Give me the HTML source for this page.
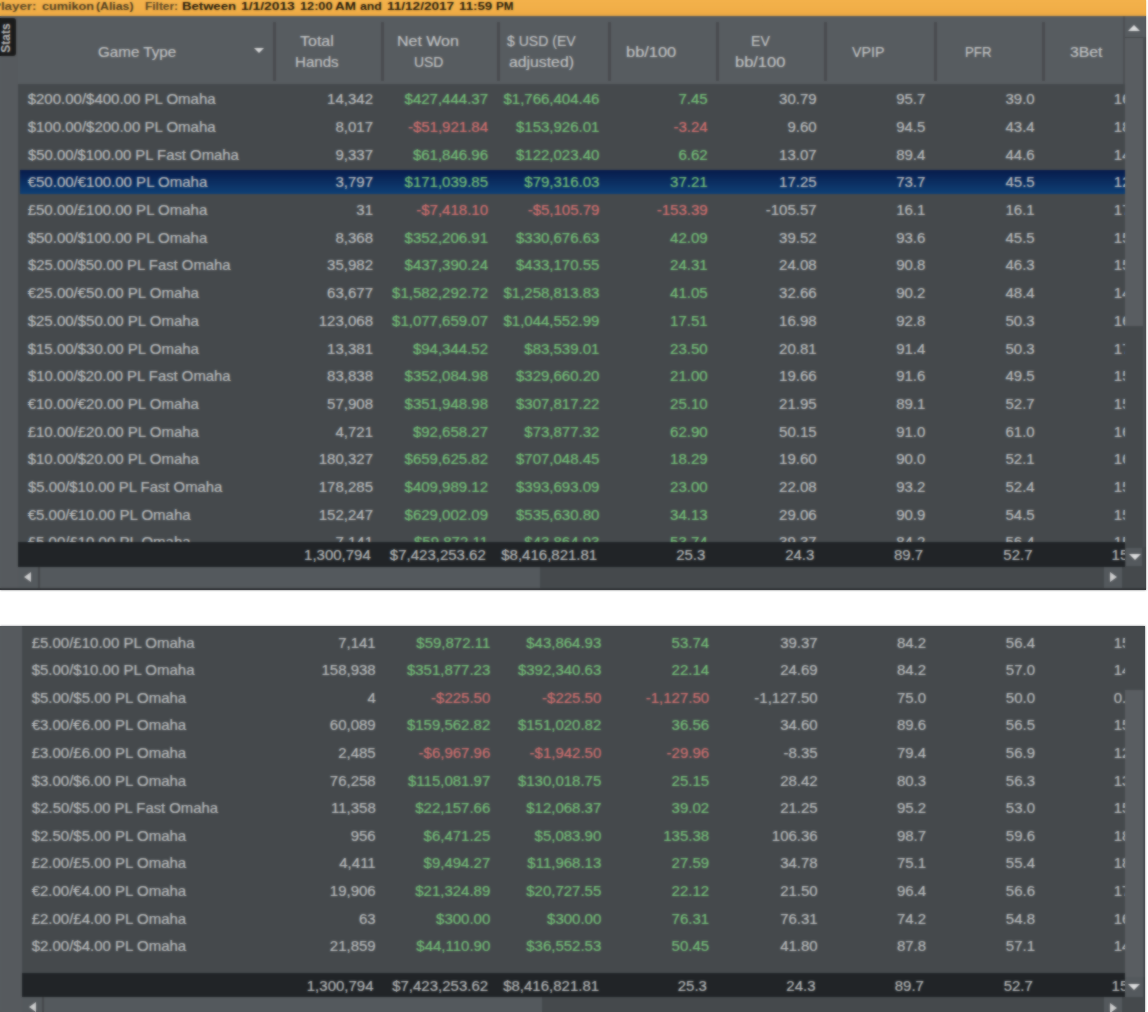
<!DOCTYPE html><html><head><meta charset='utf-8'><style>
*{margin:0;padding:0;box-sizing:border-box}
html,body{width:1148px;height:1012px;overflow:hidden;background:#fff;font-family:"Liberation Sans",sans-serif}
.a{position:absolute}
.t{position:absolute;white-space:nowrap;font-size:15px;line-height:18px;color:#bcbebf;-webkit-text-stroke:0.2px}
.g{color:#76c079}
.r{color:#d27070}
.f{color:#b9bbbc}
.hd{position:absolute;white-space:nowrap;font-size:15px;line-height:20px;color:#c3c5c6;text-align:center;-webkit-text-stroke:0.15px}
</style></head><body><div style='position:absolute;left:0;top:0;width:1148px;height:1012px;overflow:hidden'><div class="a" style="left:0;top:0;width:1146px;height:16.5px;background:linear-gradient(#f3b24c,#f0ad47 70%,#e3a443)"></div>
<div class="a" style="left:0;top:16px;width:1146px;height:1px;background:#7a6a50"></div>
<div class="a" style="left:-8.00px;top:0.3px;white-space:nowrap;font-size:10px;line-height:14px;font-weight:bold;color:#5a4624;-webkit-text-stroke:0;transform-origin:0 0;transform:scaleX(1.334)">Player:</div>
<div class="a" style="left:42.00px;top:0.3px;white-space:nowrap;font-size:10px;line-height:14px;font-weight:bold;color:#4e3c1e;-webkit-text-stroke:0;transform-origin:0 0;transform:scaleX(1.265)">cumikon</div>
<div class="a" style="left:96.00px;top:0.3px;white-space:nowrap;font-size:10px;line-height:14px;font-weight:bold;color:#4e3c1e;-webkit-text-stroke:0;transform-origin:0 0;transform:scaleX(1.227)">(Alias)</div>
<div class="a" style="left:144.80px;top:0.3px;white-space:nowrap;font-size:10px;line-height:14px;font-weight:bold;color:#5a4624;-webkit-text-stroke:0;transform-origin:0 0;transform:scaleX(1.191)">Filter:</div>
<div class="a" style="left:182.30px;top:0.3px;white-space:nowrap;font-size:10px;line-height:14px;font-weight:bold;color:#241a0a;-webkit-text-stroke:0;transform-origin:0 0;transform:scaleX(1.313)">Between</div>
<div class="a" style="left:240.60px;top:0.3px;white-space:nowrap;font-size:10px;line-height:14px;font-weight:bold;color:#241a0a;-webkit-text-stroke:0;transform-origin:0 0;transform:scaleX(1.381)">1/1/2013</div>
<div class="a" style="left:299.90px;top:0.3px;white-space:nowrap;font-size:10px;line-height:14px;font-weight:bold;color:#241a0a;-webkit-text-stroke:0;transform-origin:0 0;transform:scaleX(1.271)">12:00</div>
<div class="a" style="left:334.90px;top:0.3px;white-space:nowrap;font-size:10px;line-height:14px;font-weight:bold;color:#241a0a;-webkit-text-stroke:0;transform-origin:0 0;transform:scaleX(1.344)">AM</div>
<div class="a" style="left:360.00px;top:0.3px;white-space:nowrap;font-size:10px;line-height:14px;font-weight:bold;color:#241a0a;-webkit-text-stroke:0;transform-origin:0 0;transform:scaleX(1.226)">and</div>
<div class="a" style="left:387.00px;top:0.3px;white-space:nowrap;font-size:10px;line-height:14px;font-weight:bold;color:#241a0a;-webkit-text-stroke:0;transform-origin:0 0;transform:scaleX(1.354)">11/12/2017</div>
<div class="a" style="left:459.40px;top:0.3px;white-space:nowrap;font-size:10px;line-height:14px;font-weight:bold;color:#241a0a;-webkit-text-stroke:0;transform-origin:0 0;transform:scaleX(1.323)">11:59</div>
<div class="a" style="left:496.00px;top:0.3px;white-space:nowrap;font-size:10px;line-height:14px;font-weight:bold;color:#241a0a;-webkit-text-stroke:0;transform-origin:0 0;transform:scaleX(1.160)">PM</div>
<div class="a" style="left:0.00px;top:16.00px;width:1146.00px;height:574.00px;background:#454a4d;"></div>
<div class="a" style="left:0.00px;top:16.00px;width:18.00px;height:574.00px;background:#575b5f;"></div>
<div class="a" style="left:18.00px;top:16.00px;width:1128.00px;height:68.40px;background:#585c60;"></div>
<div class="a" style="left:272.50px;top:22.00px;width:3.00px;height:58.50px;background:#4a4c50;"></div>
<div class="a" style="left:380.50px;top:22.00px;width:3.00px;height:58.50px;background:#4a4c50;"></div>
<div class="a" style="left:496.50px;top:22.00px;width:3.00px;height:58.50px;background:#4a4c50;"></div>
<div class="a" style="left:607.50px;top:22.00px;width:3.00px;height:58.50px;background:#4a4c50;"></div>
<div class="a" style="left:715.50px;top:22.00px;width:3.00px;height:58.50px;background:#4a4c50;"></div>
<div class="a" style="left:823.50px;top:22.00px;width:3.00px;height:58.50px;background:#4a4c50;"></div>
<div class="a" style="left:933.50px;top:22.00px;width:3.00px;height:58.50px;background:#4a4c50;"></div>
<div class="a" style="left:1041.50px;top:22.00px;width:3.00px;height:58.50px;background:#4a4c50;"></div>
<div class="a" style="left:18.00px;top:84.40px;width:1106.60px;height:457.60px;background:#454a4d;"></div>
<div class="a" style="left:0;top:84.4px;width:1124.60px;height:457.6px;overflow:hidden">
<div class="t " style="left:27.70px;top:5.90px">$200.00/$400.00 PL Omaha</div>
<div class="t " style="left:73.00px;top:5.90px;width:300px;text-align:right">14,342</div>
<div class="t g" style="left:188.00px;top:5.90px;width:300px;text-align:right">$427,444.37</div>
<div class="t g" style="left:299.40px;top:5.90px;width:300px;text-align:right">$1,766,404.46</div>
<div class="t g" style="left:407.60px;top:5.90px;width:300px;text-align:right">7.45</div>
<div class="t " style="left:516.60px;top:5.90px;width:300px;text-align:right">30.79</div>
<div class="t " style="left:625.40px;top:5.90px;width:300px;text-align:right">95.7</div>
<div class="t " style="left:734.70px;top:5.90px;width:300px;text-align:right">39.0</div>
<div class="t " style="left:843.00px;top:5.90px;width:300px;text-align:right">16.8</div>
<div class="t " style="left:27.70px;top:33.60px">$100.00/$200.00 PL Omaha</div>
<div class="t " style="left:73.00px;top:33.60px;width:300px;text-align:right">8,017</div>
<div class="t r" style="left:188.00px;top:33.60px;width:300px;text-align:right">-$51,921.84</div>
<div class="t g" style="left:299.40px;top:33.60px;width:300px;text-align:right">$153,926.01</div>
<div class="t r" style="left:407.60px;top:33.60px;width:300px;text-align:right">-3.24</div>
<div class="t " style="left:516.60px;top:33.60px;width:300px;text-align:right">9.60</div>
<div class="t " style="left:625.40px;top:33.60px;width:300px;text-align:right">94.5</div>
<div class="t " style="left:734.70px;top:33.60px;width:300px;text-align:right">43.4</div>
<div class="t " style="left:843.00px;top:33.60px;width:300px;text-align:right">18.1</div>
<div class="t" style="left:27.70px;top:61.30px;transform-origin:0 0;transform:scaleX(0.99)">$50.00/$100.00 PL Fast Omaha</div>
<div class="t " style="left:73.00px;top:61.30px;width:300px;text-align:right">9,337</div>
<div class="t g" style="left:188.00px;top:61.30px;width:300px;text-align:right">$61,846.96</div>
<div class="t g" style="left:299.40px;top:61.30px;width:300px;text-align:right">$122,023.40</div>
<div class="t g" style="left:407.60px;top:61.30px;width:300px;text-align:right">6.62</div>
<div class="t " style="left:516.60px;top:61.30px;width:300px;text-align:right">13.07</div>
<div class="t " style="left:625.40px;top:61.30px;width:300px;text-align:right">89.4</div>
<div class="t " style="left:734.70px;top:61.30px;width:300px;text-align:right">44.6</div>
<div class="t " style="left:843.00px;top:61.30px;width:300px;text-align:right">14.6</div>
<div class="a" style="left:20.00px;top:85.20px;width:1104.60px;height:24.6px;background:linear-gradient(#081c4c,#104176)"></div>
<div class="t " style="left:27.70px;top:89.00px">€50.00/€100.00 PL Omaha</div>
<div class="t " style="left:73.00px;top:89.00px;width:300px;text-align:right">3,797</div>
<div class="t g" style="left:188.00px;top:89.00px;width:300px;text-align:right">$171,039.85</div>
<div class="t g" style="left:299.40px;top:89.00px;width:300px;text-align:right">$79,316.03</div>
<div class="t g" style="left:407.60px;top:89.00px;width:300px;text-align:right">37.21</div>
<div class="t " style="left:516.60px;top:89.00px;width:300px;text-align:right">17.25</div>
<div class="t " style="left:625.40px;top:89.00px;width:300px;text-align:right">73.7</div>
<div class="t " style="left:734.70px;top:89.00px;width:300px;text-align:right">45.5</div>
<div class="t " style="left:843.00px;top:89.00px;width:300px;text-align:right">12.9</div>
<div class="t " style="left:27.70px;top:116.70px">£50.00/£100.00 PL Omaha</div>
<div class="t " style="left:73.00px;top:116.70px;width:300px;text-align:right">31</div>
<div class="t r" style="left:188.00px;top:116.70px;width:300px;text-align:right">-$7,418.10</div>
<div class="t r" style="left:299.40px;top:116.70px;width:300px;text-align:right">-$5,105.79</div>
<div class="t r" style="left:407.60px;top:116.70px;width:300px;text-align:right">-153.39</div>
<div class="t " style="left:516.60px;top:116.70px;width:300px;text-align:right">-105.57</div>
<div class="t " style="left:625.40px;top:116.70px;width:300px;text-align:right">16.1</div>
<div class="t " style="left:734.70px;top:116.70px;width:300px;text-align:right">16.1</div>
<div class="t " style="left:843.00px;top:116.70px;width:300px;text-align:right">17.6</div>
<div class="t " style="left:27.70px;top:144.40px">$50.00/$100.00 PL Omaha</div>
<div class="t " style="left:73.00px;top:144.40px;width:300px;text-align:right">8,368</div>
<div class="t g" style="left:188.00px;top:144.40px;width:300px;text-align:right">$352,206.91</div>
<div class="t g" style="left:299.40px;top:144.40px;width:300px;text-align:right">$330,676.63</div>
<div class="t g" style="left:407.60px;top:144.40px;width:300px;text-align:right">42.09</div>
<div class="t " style="left:516.60px;top:144.40px;width:300px;text-align:right">39.52</div>
<div class="t " style="left:625.40px;top:144.40px;width:300px;text-align:right">93.6</div>
<div class="t " style="left:734.70px;top:144.40px;width:300px;text-align:right">45.5</div>
<div class="t " style="left:843.00px;top:144.40px;width:300px;text-align:right">15.2</div>
<div class="t" style="left:27.70px;top:172.10px;transform-origin:0 0;transform:scaleX(0.99)">$25.00/$50.00 PL Fast Omaha</div>
<div class="t " style="left:73.00px;top:172.10px;width:300px;text-align:right">35,982</div>
<div class="t g" style="left:188.00px;top:172.10px;width:300px;text-align:right">$437,390.24</div>
<div class="t g" style="left:299.40px;top:172.10px;width:300px;text-align:right">$433,170.55</div>
<div class="t g" style="left:407.60px;top:172.10px;width:300px;text-align:right">24.31</div>
<div class="t " style="left:516.60px;top:172.10px;width:300px;text-align:right">24.08</div>
<div class="t " style="left:625.40px;top:172.10px;width:300px;text-align:right">90.8</div>
<div class="t " style="left:734.70px;top:172.10px;width:300px;text-align:right">46.3</div>
<div class="t " style="left:843.00px;top:172.10px;width:300px;text-align:right">15.4</div>
<div class="t " style="left:27.70px;top:199.80px">€25.00/€50.00 PL Omaha</div>
<div class="t " style="left:73.00px;top:199.80px;width:300px;text-align:right">63,677</div>
<div class="t g" style="left:188.00px;top:199.80px;width:300px;text-align:right">$1,582,292.72</div>
<div class="t g" style="left:299.40px;top:199.80px;width:300px;text-align:right">$1,258,813.83</div>
<div class="t g" style="left:407.60px;top:199.80px;width:300px;text-align:right">41.05</div>
<div class="t " style="left:516.60px;top:199.80px;width:300px;text-align:right">32.66</div>
<div class="t " style="left:625.40px;top:199.80px;width:300px;text-align:right">90.2</div>
<div class="t " style="left:734.70px;top:199.80px;width:300px;text-align:right">48.4</div>
<div class="t " style="left:843.00px;top:199.80px;width:300px;text-align:right">14.3</div>
<div class="t " style="left:27.70px;top:227.50px">$25.00/$50.00 PL Omaha</div>
<div class="t " style="left:73.00px;top:227.50px;width:300px;text-align:right">123,068</div>
<div class="t g" style="left:188.00px;top:227.50px;width:300px;text-align:right">$1,077,659.07</div>
<div class="t g" style="left:299.40px;top:227.50px;width:300px;text-align:right">$1,044,552.99</div>
<div class="t g" style="left:407.60px;top:227.50px;width:300px;text-align:right">17.51</div>
<div class="t " style="left:516.60px;top:227.50px;width:300px;text-align:right">16.98</div>
<div class="t " style="left:625.40px;top:227.50px;width:300px;text-align:right">92.8</div>
<div class="t " style="left:734.70px;top:227.50px;width:300px;text-align:right">50.3</div>
<div class="t " style="left:843.00px;top:227.50px;width:300px;text-align:right">16.2</div>
<div class="t " style="left:27.70px;top:255.20px">$15.00/$30.00 PL Omaha</div>
<div class="t " style="left:73.00px;top:255.20px;width:300px;text-align:right">13,381</div>
<div class="t g" style="left:188.00px;top:255.20px;width:300px;text-align:right">$94,344.52</div>
<div class="t g" style="left:299.40px;top:255.20px;width:300px;text-align:right">$83,539.01</div>
<div class="t g" style="left:407.60px;top:255.20px;width:300px;text-align:right">23.50</div>
<div class="t " style="left:516.60px;top:255.20px;width:300px;text-align:right">20.81</div>
<div class="t " style="left:625.40px;top:255.20px;width:300px;text-align:right">91.4</div>
<div class="t " style="left:734.70px;top:255.20px;width:300px;text-align:right">50.3</div>
<div class="t " style="left:843.00px;top:255.20px;width:300px;text-align:right">17.1</div>
<div class="t" style="left:27.70px;top:282.90px;transform-origin:0 0;transform:scaleX(0.99)">$10.00/$20.00 PL Fast Omaha</div>
<div class="t " style="left:73.00px;top:282.90px;width:300px;text-align:right">83,838</div>
<div class="t g" style="left:188.00px;top:282.90px;width:300px;text-align:right">$352,084.98</div>
<div class="t g" style="left:299.40px;top:282.90px;width:300px;text-align:right">$329,660.20</div>
<div class="t g" style="left:407.60px;top:282.90px;width:300px;text-align:right">21.00</div>
<div class="t " style="left:516.60px;top:282.90px;width:300px;text-align:right">19.66</div>
<div class="t " style="left:625.40px;top:282.90px;width:300px;text-align:right">91.6</div>
<div class="t " style="left:734.70px;top:282.90px;width:300px;text-align:right">49.5</div>
<div class="t " style="left:843.00px;top:282.90px;width:300px;text-align:right">15.5</div>
<div class="t " style="left:27.70px;top:310.60px">€10.00/€20.00 PL Omaha</div>
<div class="t " style="left:73.00px;top:310.60px;width:300px;text-align:right">57,908</div>
<div class="t g" style="left:188.00px;top:310.60px;width:300px;text-align:right">$351,948.98</div>
<div class="t g" style="left:299.40px;top:310.60px;width:300px;text-align:right">$307,817.22</div>
<div class="t g" style="left:407.60px;top:310.60px;width:300px;text-align:right">25.10</div>
<div class="t " style="left:516.60px;top:310.60px;width:300px;text-align:right">21.95</div>
<div class="t " style="left:625.40px;top:310.60px;width:300px;text-align:right">89.1</div>
<div class="t " style="left:734.70px;top:310.60px;width:300px;text-align:right">52.7</div>
<div class="t " style="left:843.00px;top:310.60px;width:300px;text-align:right">15.9</div>
<div class="t " style="left:27.70px;top:338.30px">£10.00/£20.00 PL Omaha</div>
<div class="t " style="left:73.00px;top:338.30px;width:300px;text-align:right">4,721</div>
<div class="t g" style="left:188.00px;top:338.30px;width:300px;text-align:right">$92,658.27</div>
<div class="t g" style="left:299.40px;top:338.30px;width:300px;text-align:right">$73,877.32</div>
<div class="t g" style="left:407.60px;top:338.30px;width:300px;text-align:right">62.90</div>
<div class="t " style="left:516.60px;top:338.30px;width:300px;text-align:right">50.15</div>
<div class="t " style="left:625.40px;top:338.30px;width:300px;text-align:right">91.0</div>
<div class="t " style="left:734.70px;top:338.30px;width:300px;text-align:right">61.0</div>
<div class="t " style="left:843.00px;top:338.30px;width:300px;text-align:right">16.1</div>
<div class="t " style="left:27.70px;top:366.00px">$10.00/$20.00 PL Omaha</div>
<div class="t " style="left:73.00px;top:366.00px;width:300px;text-align:right">180,327</div>
<div class="t g" style="left:188.00px;top:366.00px;width:300px;text-align:right">$659,625.82</div>
<div class="t g" style="left:299.40px;top:366.00px;width:300px;text-align:right">$707,048.45</div>
<div class="t g" style="left:407.60px;top:366.00px;width:300px;text-align:right">18.29</div>
<div class="t " style="left:516.60px;top:366.00px;width:300px;text-align:right">19.60</div>
<div class="t " style="left:625.40px;top:366.00px;width:300px;text-align:right">90.0</div>
<div class="t " style="left:734.70px;top:366.00px;width:300px;text-align:right">52.1</div>
<div class="t " style="left:843.00px;top:366.00px;width:300px;text-align:right">16.4</div>
<div class="t" style="left:27.70px;top:393.70px;transform-origin:0 0;transform:scaleX(0.99)">$5.00/$10.00 PL Fast Omaha</div>
<div class="t " style="left:73.00px;top:393.70px;width:300px;text-align:right">178,285</div>
<div class="t g" style="left:188.00px;top:393.70px;width:300px;text-align:right">$409,989.12</div>
<div class="t g" style="left:299.40px;top:393.70px;width:300px;text-align:right">$393,693.09</div>
<div class="t g" style="left:407.60px;top:393.70px;width:300px;text-align:right">23.00</div>
<div class="t " style="left:516.60px;top:393.70px;width:300px;text-align:right">22.08</div>
<div class="t " style="left:625.40px;top:393.70px;width:300px;text-align:right">93.2</div>
<div class="t " style="left:734.70px;top:393.70px;width:300px;text-align:right">52.4</div>
<div class="t " style="left:843.00px;top:393.70px;width:300px;text-align:right">15.3</div>
<div class="t " style="left:27.70px;top:421.40px">€5.00/€10.00 PL Omaha</div>
<div class="t " style="left:73.00px;top:421.40px;width:300px;text-align:right">152,247</div>
<div class="t g" style="left:188.00px;top:421.40px;width:300px;text-align:right">$629,002.09</div>
<div class="t g" style="left:299.40px;top:421.40px;width:300px;text-align:right">$535,630.80</div>
<div class="t g" style="left:407.60px;top:421.40px;width:300px;text-align:right">34.13</div>
<div class="t " style="left:516.60px;top:421.40px;width:300px;text-align:right">29.06</div>
<div class="t " style="left:625.40px;top:421.40px;width:300px;text-align:right">90.9</div>
<div class="t " style="left:734.70px;top:421.40px;width:300px;text-align:right">54.5</div>
<div class="t " style="left:843.00px;top:421.40px;width:300px;text-align:right">15.8</div>
<div class="t " style="left:27.70px;top:449.10px">£5.00/£10.00 PL Omaha</div>
<div class="t " style="left:73.00px;top:449.10px;width:300px;text-align:right">7,141</div>
<div class="t g" style="left:188.00px;top:449.10px;width:300px;text-align:right">$59,872.11</div>
<div class="t g" style="left:299.40px;top:449.10px;width:300px;text-align:right">$43,864.93</div>
<div class="t g" style="left:407.60px;top:449.10px;width:300px;text-align:right">53.74</div>
<div class="t " style="left:516.60px;top:449.10px;width:300px;text-align:right">39.37</div>
<div class="t " style="left:625.40px;top:449.10px;width:300px;text-align:right">84.2</div>
<div class="t " style="left:734.70px;top:449.10px;width:300px;text-align:right">56.4</div>
<div class="t " style="left:843.00px;top:449.10px;width:300px;text-align:right">15.1</div>
</div>
<div class="a" style="left:18.00px;top:542.00px;width:1106.60px;height:25.00px;background:#212528;"></div>
<div class="a" style="left:0;top:542px;width:1124.60px;height:25px;overflow:hidden">
<div class="t f" style="left:70.80px;top:4.00px;width:300px;text-align:right">1,300,794</div>
<div class="t f" style="left:185.80px;top:4.00px;width:300px;text-align:right">$7,423,253.62</div>
<div class="t f" style="left:297.20px;top:4.00px;width:300px;text-align:right">$8,416,821.81</div>
<div class="t f" style="left:405.40px;top:4.00px;width:300px;text-align:right">25.3</div>
<div class="t f" style="left:514.40px;top:4.00px;width:300px;text-align:right">24.3</div>
<div class="t f" style="left:623.20px;top:4.00px;width:300px;text-align:right">89.7</div>
<div class="t f" style="left:732.50px;top:4.00px;width:300px;text-align:right">52.7</div>
<div class="t f" style="left:840.80px;top:4.00px;width:300px;text-align:right">15.6</div>
</div>
<div class="a" style="left:1124.60px;top:37.00px;width:21.40px;height:289.00px;background:#5a5e62;"></div>
<div class="a" style="left:18.00px;top:567.00px;width:1106.60px;height:21.00px;background:#454a4d;"></div>
<div class="a" style="left:18.00px;top:567.00px;width:522.00px;height:21.00px;background:#55595d;"></div>
<div class="a" style="left:37.50px;top:567.00px;width:2.00px;height:21.00px;background:#47494c;"></div>
<div class="a" style="left:1104.00px;top:567.00px;width:18.30px;height:21.00px;background:#55595d;"></div>
<div class="a" style="left:0.00px;top:626.00px;width:1145.00px;height:386.00px;background:#454a4d;"></div>
<div class="a" style="left:0.00px;top:626.00px;width:22.00px;height:386.00px;background:#575b5f;"></div>
<div class="a" style="left:22.00px;top:626.00px;width:1102.62px;height:347.00px;background:#454a4d;"></div>
<div class="a" style="left:0;top:626px;width:1124.62px;height:347px;overflow:hidden">
<div class="t " style="left:31.67px;top:7.60px">£5.00/£10.00 PL Omaha</div>
<div class="t " style="left:75.72px;top:7.60px;width:300px;text-align:right">7,141</div>
<div class="t g" style="left:190.31px;top:7.60px;width:300px;text-align:right">$59,872.11</div>
<div class="t g" style="left:301.31px;top:7.60px;width:300px;text-align:right">$43,864.93</div>
<div class="t g" style="left:409.12px;top:7.60px;width:300px;text-align:right">53.74</div>
<div class="t " style="left:517.73px;top:7.60px;width:300px;text-align:right">39.37</div>
<div class="t " style="left:626.13px;top:7.60px;width:300px;text-align:right">84.2</div>
<div class="t " style="left:735.04px;top:7.60px;width:300px;text-align:right">56.4</div>
<div class="t " style="left:842.95px;top:7.60px;width:300px;text-align:right">15.1</div>
<div class="t " style="left:31.67px;top:35.20px">$5.00/$10.00 PL Omaha</div>
<div class="t " style="left:75.72px;top:35.20px;width:300px;text-align:right">158,938</div>
<div class="t g" style="left:190.31px;top:35.20px;width:300px;text-align:right">$351,877.23</div>
<div class="t g" style="left:301.31px;top:35.20px;width:300px;text-align:right">$392,340.63</div>
<div class="t g" style="left:409.12px;top:35.20px;width:300px;text-align:right">22.14</div>
<div class="t " style="left:517.73px;top:35.20px;width:300px;text-align:right">24.69</div>
<div class="t " style="left:626.13px;top:35.20px;width:300px;text-align:right">84.2</div>
<div class="t " style="left:735.04px;top:35.20px;width:300px;text-align:right">57.0</div>
<div class="t " style="left:842.95px;top:35.20px;width:300px;text-align:right">14.6</div>
<div class="t " style="left:31.67px;top:62.80px">$5.00/$5.00 PL Omaha</div>
<div class="t " style="left:75.72px;top:62.80px;width:300px;text-align:right">4</div>
<div class="t r" style="left:190.31px;top:62.80px;width:300px;text-align:right">-$225.50</div>
<div class="t r" style="left:301.31px;top:62.80px;width:300px;text-align:right">-$225.50</div>
<div class="t r" style="left:409.12px;top:62.80px;width:300px;text-align:right">-1,127.50</div>
<div class="t " style="left:517.73px;top:62.80px;width:300px;text-align:right">-1,127.50</div>
<div class="t " style="left:626.13px;top:62.80px;width:300px;text-align:right">75.0</div>
<div class="t " style="left:735.04px;top:62.80px;width:300px;text-align:right">50.0</div>
<div class="t " style="left:842.95px;top:62.80px;width:300px;text-align:right">0.00</div>
<div class="t " style="left:31.67px;top:90.40px">€3.00/€6.00 PL Omaha</div>
<div class="t " style="left:75.72px;top:90.40px;width:300px;text-align:right">60,089</div>
<div class="t g" style="left:190.31px;top:90.40px;width:300px;text-align:right">$159,562.82</div>
<div class="t g" style="left:301.31px;top:90.40px;width:300px;text-align:right">$151,020.82</div>
<div class="t g" style="left:409.12px;top:90.40px;width:300px;text-align:right">36.56</div>
<div class="t " style="left:517.73px;top:90.40px;width:300px;text-align:right">34.60</div>
<div class="t " style="left:626.13px;top:90.40px;width:300px;text-align:right">89.6</div>
<div class="t " style="left:735.04px;top:90.40px;width:300px;text-align:right">56.5</div>
<div class="t " style="left:842.95px;top:90.40px;width:300px;text-align:right">15.1</div>
<div class="t " style="left:31.67px;top:118.00px">£3.00/£6.00 PL Omaha</div>
<div class="t " style="left:75.72px;top:118.00px;width:300px;text-align:right">2,485</div>
<div class="t r" style="left:190.31px;top:118.00px;width:300px;text-align:right">-$6,967.96</div>
<div class="t r" style="left:301.31px;top:118.00px;width:300px;text-align:right">-$1,942.50</div>
<div class="t r" style="left:409.12px;top:118.00px;width:300px;text-align:right">-29.96</div>
<div class="t " style="left:517.73px;top:118.00px;width:300px;text-align:right">-8.35</div>
<div class="t " style="left:626.13px;top:118.00px;width:300px;text-align:right">79.4</div>
<div class="t " style="left:735.04px;top:118.00px;width:300px;text-align:right">56.9</div>
<div class="t " style="left:842.95px;top:118.00px;width:300px;text-align:right">12.5</div>
<div class="t " style="left:31.67px;top:145.60px">$3.00/$6.00 PL Omaha</div>
<div class="t " style="left:75.72px;top:145.60px;width:300px;text-align:right">76,258</div>
<div class="t g" style="left:190.31px;top:145.60px;width:300px;text-align:right">$115,081.97</div>
<div class="t g" style="left:301.31px;top:145.60px;width:300px;text-align:right">$130,018.75</div>
<div class="t g" style="left:409.12px;top:145.60px;width:300px;text-align:right">25.15</div>
<div class="t " style="left:517.73px;top:145.60px;width:300px;text-align:right">28.42</div>
<div class="t " style="left:626.13px;top:145.60px;width:300px;text-align:right">80.3</div>
<div class="t " style="left:735.04px;top:145.60px;width:300px;text-align:right">56.3</div>
<div class="t " style="left:842.95px;top:145.60px;width:300px;text-align:right">13.6</div>
<div class="t" style="left:31.67px;top:173.20px;transform-origin:0 0;transform:scaleX(0.99)">$2.50/$5.00 PL Fast Omaha</div>
<div class="t " style="left:75.72px;top:173.20px;width:300px;text-align:right">11,358</div>
<div class="t g" style="left:190.31px;top:173.20px;width:300px;text-align:right">$22,157.66</div>
<div class="t g" style="left:301.31px;top:173.20px;width:300px;text-align:right">$12,068.37</div>
<div class="t g" style="left:409.12px;top:173.20px;width:300px;text-align:right">39.02</div>
<div class="t " style="left:517.73px;top:173.20px;width:300px;text-align:right">21.25</div>
<div class="t " style="left:626.13px;top:173.20px;width:300px;text-align:right">95.2</div>
<div class="t " style="left:735.04px;top:173.20px;width:300px;text-align:right">53.0</div>
<div class="t " style="left:842.95px;top:173.20px;width:300px;text-align:right">15.3</div>
<div class="t " style="left:31.67px;top:200.80px">$2.50/$5.00 PL Omaha</div>
<div class="t " style="left:75.72px;top:200.80px;width:300px;text-align:right">956</div>
<div class="t g" style="left:190.31px;top:200.80px;width:300px;text-align:right">$6,471.25</div>
<div class="t g" style="left:301.31px;top:200.80px;width:300px;text-align:right">$5,083.90</div>
<div class="t g" style="left:409.12px;top:200.80px;width:300px;text-align:right">135.38</div>
<div class="t " style="left:517.73px;top:200.80px;width:300px;text-align:right">106.36</div>
<div class="t " style="left:626.13px;top:200.80px;width:300px;text-align:right">98.7</div>
<div class="t " style="left:735.04px;top:200.80px;width:300px;text-align:right">59.6</div>
<div class="t " style="left:842.95px;top:200.80px;width:300px;text-align:right">18.2</div>
<div class="t " style="left:31.67px;top:228.40px">£2.00/£5.00 PL Omaha</div>
<div class="t " style="left:75.72px;top:228.40px;width:300px;text-align:right">4,411</div>
<div class="t g" style="left:190.31px;top:228.40px;width:300px;text-align:right">$9,494.27</div>
<div class="t g" style="left:301.31px;top:228.40px;width:300px;text-align:right">$11,968.13</div>
<div class="t g" style="left:409.12px;top:228.40px;width:300px;text-align:right">27.59</div>
<div class="t " style="left:517.73px;top:228.40px;width:300px;text-align:right">34.78</div>
<div class="t " style="left:626.13px;top:228.40px;width:300px;text-align:right">75.1</div>
<div class="t " style="left:735.04px;top:228.40px;width:300px;text-align:right">55.4</div>
<div class="t " style="left:842.95px;top:228.40px;width:300px;text-align:right">18.3</div>
<div class="t " style="left:31.67px;top:256.00px">€2.00/€4.00 PL Omaha</div>
<div class="t " style="left:75.72px;top:256.00px;width:300px;text-align:right">19,906</div>
<div class="t g" style="left:190.31px;top:256.00px;width:300px;text-align:right">$21,324.89</div>
<div class="t g" style="left:301.31px;top:256.00px;width:300px;text-align:right">$20,727.55</div>
<div class="t g" style="left:409.12px;top:256.00px;width:300px;text-align:right">22.12</div>
<div class="t " style="left:517.73px;top:256.00px;width:300px;text-align:right">21.50</div>
<div class="t " style="left:626.13px;top:256.00px;width:300px;text-align:right">96.4</div>
<div class="t " style="left:735.04px;top:256.00px;width:300px;text-align:right">56.6</div>
<div class="t " style="left:842.95px;top:256.00px;width:300px;text-align:right">17.1</div>
<div class="t " style="left:31.67px;top:283.60px">£2.00/£4.00 PL Omaha</div>
<div class="t " style="left:75.72px;top:283.60px;width:300px;text-align:right">63</div>
<div class="t g" style="left:190.31px;top:283.60px;width:300px;text-align:right">$300.00</div>
<div class="t g" style="left:301.31px;top:283.60px;width:300px;text-align:right">$300.00</div>
<div class="t g" style="left:409.12px;top:283.60px;width:300px;text-align:right">76.31</div>
<div class="t " style="left:517.73px;top:283.60px;width:300px;text-align:right">76.31</div>
<div class="t " style="left:626.13px;top:283.60px;width:300px;text-align:right">74.2</div>
<div class="t " style="left:735.04px;top:283.60px;width:300px;text-align:right">54.8</div>
<div class="t " style="left:842.95px;top:283.60px;width:300px;text-align:right">16.7</div>
<div class="t " style="left:31.67px;top:311.20px">$2.00/$4.00 PL Omaha</div>
<div class="t " style="left:75.72px;top:311.20px;width:300px;text-align:right">21,859</div>
<div class="t g" style="left:190.31px;top:311.20px;width:300px;text-align:right">$44,110.90</div>
<div class="t g" style="left:301.31px;top:311.20px;width:300px;text-align:right">$36,552.53</div>
<div class="t g" style="left:409.12px;top:311.20px;width:300px;text-align:right">50.45</div>
<div class="t " style="left:517.73px;top:311.20px;width:300px;text-align:right">41.80</div>
<div class="t " style="left:626.13px;top:311.20px;width:300px;text-align:right">87.8</div>
<div class="t " style="left:735.04px;top:311.20px;width:300px;text-align:right">57.1</div>
<div class="t " style="left:842.95px;top:311.20px;width:300px;text-align:right">14.9</div>
</div>
<div class="a" style="left:22.00px;top:973.00px;width:1102.62px;height:24.00px;background:#212528;"></div>
<div class="a" style="left:0;top:973px;width:1124.62px;height:24px;overflow:hidden">
<div class="t f" style="left:73.52px;top:3.50px;width:300px;text-align:right">1,300,794</div>
<div class="t f" style="left:188.11px;top:3.50px;width:300px;text-align:right">$7,423,253.62</div>
<div class="t f" style="left:299.11px;top:3.50px;width:300px;text-align:right">$8,416,821.81</div>
<div class="t f" style="left:406.92px;top:3.50px;width:300px;text-align:right">25.3</div>
<div class="t f" style="left:515.53px;top:3.50px;width:300px;text-align:right">24.3</div>
<div class="t f" style="left:623.93px;top:3.50px;width:300px;text-align:right">89.7</div>
<div class="t f" style="left:732.84px;top:3.50px;width:300px;text-align:right">52.7</div>
<div class="t f" style="left:840.75px;top:3.50px;width:300px;text-align:right">15.6</div>
</div>
<div class="a" style="left:1124.62px;top:690.00px;width:20.38px;height:287.00px;background:#5a5e62;"></div>
<div class="a" style="left:22.00px;top:997.00px;width:1102.62px;height:15.00px;background:#454a4d;"></div>
<div class="a" style="left:22.00px;top:997.00px;width:520.12px;height:15.00px;background:#55595d;"></div>
<div class="a" style="left:41.50px;top:997.00px;width:2.00px;height:15.00px;background:#47494c;"></div>
<div class="a" style="left:1104.09px;top:997.00px;width:18.23px;height:15.00px;background:#55595d;"></div>
<div class="a" style="left:0;top:16px;width:1124.6px;height:68px;overflow:hidden">
<div class="hd" style="left:97.70px;top:26.30px;text-align:left;transform-origin:0 0;transform:scaleX(1.012)">Game Type</div>
<div class="hd" style="left:300.40px;top:15.30px;text-align:left;transform-origin:0 0;transform:scaleX(1.067)">Total</div>
<div class="hd" style="left:295.00px;top:35.70px;text-align:left;transform-origin:0 0;transform:scaleX(1.006)">Hands</div>
<div class="hd" style="left:397.20px;top:15.30px;text-align:left;transform-origin:0 0;transform:scaleX(1.064)">Net Won</div>
<div class="hd" style="left:413.90px;top:35.70px;text-align:left;transform-origin:0 0;transform:scaleX(0.928)">USD</div>
<div class="hd" style="left:507.40px;top:15.30px;text-align:left;transform-origin:0 0;transform:scaleX(0.935)">$ USD (EV</div>
<div class="hd" style="left:509.00px;top:35.70px;text-align:left;transform-origin:0 0;transform:scaleX(1.052)">adjusted)</div>
<div class="hd" style="left:626.40px;top:25.50px;text-align:left;transform-origin:0 0;transform:scaleX(1.094)">bb/100</div>
<div class="hd" style="left:751.30px;top:15.30px;text-align:left;transform-origin:0 0;transform:scaleX(0.939)">EV</div>
<div class="hd" style="left:735.30px;top:35.70px;text-align:left;transform-origin:0 0;transform:scaleX(1.096)">bb/100</div>
<div class="hd" style="left:852.40px;top:25.50px;text-align:left;transform-origin:0 0;transform:scaleX(0.948)">VPIP</div>
<div class="hd" style="left:964.80px;top:25.50px;text-align:left;transform-origin:0 0;transform:scaleX(0.883)">PFR</div>
<div class="hd" style="left:1070.10px;top:25.50px;text-align:left;transform-origin:0 0;transform:scaleX(1.053)">3Bet</div>
</div>
<div class="a" style="left:253.8px;top:47.8px;width:0;height:0;border-left:5.2px solid transparent;border-right:5.2px solid transparent;border-top:5.5px solid #d3d4d5"></div>
<div class="a" style="left:0;top:18.3px;width:15.5px;height:38px;background:#1b1c1d;border-radius:0 3px 3px 0"></div>
<div class="a" style="left:-14px;top:31px;width:40px;height:14px;transform:rotate(-90deg);font-size:12px;line-height:14px;font-weight:bold;color:#bdbdbd;text-align:center">Stats</div>
<div class="a" style="left:1124.60px;top:16.00px;width:21.40px;height:21.00px;background:#585c60;"></div>
<div class="a" style="left:1125.00px;top:36.50px;width:18.00px;height:1.50px;background:#454a4d;"></div>
<div class="a" style="left:1123.20px;top:16.00px;width:1.60px;height:68.00px;background:#4d5054;"></div>
<div class="a" style="left:1143.00px;top:37.00px;width:3.00px;height:510.00px;background:#4c4f53;"></div>
<div class="a" style="left:1128px;top:24.5px;width:0;height:0;border-left:6px solid transparent;border-right:6px solid transparent;border-bottom:6px solid #d9dadb"></div>
<div class="a" style="left:1125.60px;top:548.00px;width:16.00px;height:18.00px;background:#55595d;"></div>
<div class="a" style="left:1128.5px;top:553.6px;width:0;height:0;border-left:6px solid transparent;border-right:6px solid transparent;border-top:6px solid #d9dadb"></div>
<div class="a" style="left:24.3px;top:571.8px;width:0;height:0;border-top:5.5px solid transparent;border-bottom:5.5px solid transparent;border-right:7px solid #c9cacb"></div>
<div class="a" style="left:1109.8px;top:571.8px;width:0;height:0;border-top:5.5px solid transparent;border-bottom:5.5px solid transparent;border-left:7px solid #c9cacb"></div>
<div class="a" style="left:0.00px;top:588.00px;width:1146.00px;height:2.00px;background:#36393c;"></div>
<div class="a" style="left:1125.00px;top:977.20px;width:18.00px;height:19.50px;background:#55595d;"></div>
<div class="a" style="left:1128px;top:984px;width:0;height:0;border-left:6px solid transparent;border-right:6px solid transparent;border-top:6px solid #d9dadb"></div>
<div class="a" style="left:1143.00px;top:690.00px;width:2.00px;height:287.00px;background:#4c4f53;"></div>
<div class="a" style="left:29.1px;top:1002.0px;width:0;height:0;border-top:5.5px solid transparent;border-bottom:5.5px solid transparent;border-right:7px solid #c9cacb"></div>
<div class="a" style="left:1109.5px;top:1002.5px;width:0;height:0;border-top:5.5px solid transparent;border-bottom:5.5px solid transparent;border-left:7px solid #c9cacb"></div></div><div style='position:absolute;left:0;top:0;width:1148px;height:1012px;overflow:hidden;filter:blur(1.0px);opacity:0.7'><div class="a" style="left:0;top:0;width:1146px;height:16.5px;background:linear-gradient(#f3b24c,#f0ad47 70%,#e3a443)"></div>
<div class="a" style="left:0;top:16px;width:1146px;height:1px;background:#7a6a50"></div>
<div class="a" style="left:-8.00px;top:0.3px;white-space:nowrap;font-size:10px;line-height:14px;font-weight:bold;color:#5a4624;-webkit-text-stroke:0;transform-origin:0 0;transform:scaleX(1.334)">Player:</div>
<div class="a" style="left:42.00px;top:0.3px;white-space:nowrap;font-size:10px;line-height:14px;font-weight:bold;color:#4e3c1e;-webkit-text-stroke:0;transform-origin:0 0;transform:scaleX(1.265)">cumikon</div>
<div class="a" style="left:96.00px;top:0.3px;white-space:nowrap;font-size:10px;line-height:14px;font-weight:bold;color:#4e3c1e;-webkit-text-stroke:0;transform-origin:0 0;transform:scaleX(1.227)">(Alias)</div>
<div class="a" style="left:144.80px;top:0.3px;white-space:nowrap;font-size:10px;line-height:14px;font-weight:bold;color:#5a4624;-webkit-text-stroke:0;transform-origin:0 0;transform:scaleX(1.191)">Filter:</div>
<div class="a" style="left:182.30px;top:0.3px;white-space:nowrap;font-size:10px;line-height:14px;font-weight:bold;color:#241a0a;-webkit-text-stroke:0;transform-origin:0 0;transform:scaleX(1.313)">Between</div>
<div class="a" style="left:240.60px;top:0.3px;white-space:nowrap;font-size:10px;line-height:14px;font-weight:bold;color:#241a0a;-webkit-text-stroke:0;transform-origin:0 0;transform:scaleX(1.381)">1/1/2013</div>
<div class="a" style="left:299.90px;top:0.3px;white-space:nowrap;font-size:10px;line-height:14px;font-weight:bold;color:#241a0a;-webkit-text-stroke:0;transform-origin:0 0;transform:scaleX(1.271)">12:00</div>
<div class="a" style="left:334.90px;top:0.3px;white-space:nowrap;font-size:10px;line-height:14px;font-weight:bold;color:#241a0a;-webkit-text-stroke:0;transform-origin:0 0;transform:scaleX(1.344)">AM</div>
<div class="a" style="left:360.00px;top:0.3px;white-space:nowrap;font-size:10px;line-height:14px;font-weight:bold;color:#241a0a;-webkit-text-stroke:0;transform-origin:0 0;transform:scaleX(1.226)">and</div>
<div class="a" style="left:387.00px;top:0.3px;white-space:nowrap;font-size:10px;line-height:14px;font-weight:bold;color:#241a0a;-webkit-text-stroke:0;transform-origin:0 0;transform:scaleX(1.354)">11/12/2017</div>
<div class="a" style="left:459.40px;top:0.3px;white-space:nowrap;font-size:10px;line-height:14px;font-weight:bold;color:#241a0a;-webkit-text-stroke:0;transform-origin:0 0;transform:scaleX(1.323)">11:59</div>
<div class="a" style="left:496.00px;top:0.3px;white-space:nowrap;font-size:10px;line-height:14px;font-weight:bold;color:#241a0a;-webkit-text-stroke:0;transform-origin:0 0;transform:scaleX(1.160)">PM</div>
<div class="a" style="left:0.00px;top:16.00px;width:1146.00px;height:574.00px;background:#454a4d;"></div>
<div class="a" style="left:0.00px;top:16.00px;width:18.00px;height:574.00px;background:#575b5f;"></div>
<div class="a" style="left:18.00px;top:16.00px;width:1128.00px;height:68.40px;background:#585c60;"></div>
<div class="a" style="left:272.50px;top:22.00px;width:3.00px;height:58.50px;background:#4a4c50;"></div>
<div class="a" style="left:380.50px;top:22.00px;width:3.00px;height:58.50px;background:#4a4c50;"></div>
<div class="a" style="left:496.50px;top:22.00px;width:3.00px;height:58.50px;background:#4a4c50;"></div>
<div class="a" style="left:607.50px;top:22.00px;width:3.00px;height:58.50px;background:#4a4c50;"></div>
<div class="a" style="left:715.50px;top:22.00px;width:3.00px;height:58.50px;background:#4a4c50;"></div>
<div class="a" style="left:823.50px;top:22.00px;width:3.00px;height:58.50px;background:#4a4c50;"></div>
<div class="a" style="left:933.50px;top:22.00px;width:3.00px;height:58.50px;background:#4a4c50;"></div>
<div class="a" style="left:1041.50px;top:22.00px;width:3.00px;height:58.50px;background:#4a4c50;"></div>
<div class="a" style="left:18.00px;top:84.40px;width:1106.60px;height:457.60px;background:#454a4d;"></div>
<div class="a" style="left:0;top:84.4px;width:1124.60px;height:457.6px;overflow:hidden">
<div class="t " style="left:27.70px;top:5.90px">$200.00/$400.00 PL Omaha</div>
<div class="t " style="left:73.00px;top:5.90px;width:300px;text-align:right">14,342</div>
<div class="t g" style="left:188.00px;top:5.90px;width:300px;text-align:right">$427,444.37</div>
<div class="t g" style="left:299.40px;top:5.90px;width:300px;text-align:right">$1,766,404.46</div>
<div class="t g" style="left:407.60px;top:5.90px;width:300px;text-align:right">7.45</div>
<div class="t " style="left:516.60px;top:5.90px;width:300px;text-align:right">30.79</div>
<div class="t " style="left:625.40px;top:5.90px;width:300px;text-align:right">95.7</div>
<div class="t " style="left:734.70px;top:5.90px;width:300px;text-align:right">39.0</div>
<div class="t " style="left:843.00px;top:5.90px;width:300px;text-align:right">16.8</div>
<div class="t " style="left:27.70px;top:33.60px">$100.00/$200.00 PL Omaha</div>
<div class="t " style="left:73.00px;top:33.60px;width:300px;text-align:right">8,017</div>
<div class="t r" style="left:188.00px;top:33.60px;width:300px;text-align:right">-$51,921.84</div>
<div class="t g" style="left:299.40px;top:33.60px;width:300px;text-align:right">$153,926.01</div>
<div class="t r" style="left:407.60px;top:33.60px;width:300px;text-align:right">-3.24</div>
<div class="t " style="left:516.60px;top:33.60px;width:300px;text-align:right">9.60</div>
<div class="t " style="left:625.40px;top:33.60px;width:300px;text-align:right">94.5</div>
<div class="t " style="left:734.70px;top:33.60px;width:300px;text-align:right">43.4</div>
<div class="t " style="left:843.00px;top:33.60px;width:300px;text-align:right">18.1</div>
<div class="t" style="left:27.70px;top:61.30px;transform-origin:0 0;transform:scaleX(0.99)">$50.00/$100.00 PL Fast Omaha</div>
<div class="t " style="left:73.00px;top:61.30px;width:300px;text-align:right">9,337</div>
<div class="t g" style="left:188.00px;top:61.30px;width:300px;text-align:right">$61,846.96</div>
<div class="t g" style="left:299.40px;top:61.30px;width:300px;text-align:right">$122,023.40</div>
<div class="t g" style="left:407.60px;top:61.30px;width:300px;text-align:right">6.62</div>
<div class="t " style="left:516.60px;top:61.30px;width:300px;text-align:right">13.07</div>
<div class="t " style="left:625.40px;top:61.30px;width:300px;text-align:right">89.4</div>
<div class="t " style="left:734.70px;top:61.30px;width:300px;text-align:right">44.6</div>
<div class="t " style="left:843.00px;top:61.30px;width:300px;text-align:right">14.6</div>
<div class="a" style="left:20.00px;top:85.20px;width:1104.60px;height:24.6px;background:linear-gradient(#081c4c,#104176)"></div>
<div class="t " style="left:27.70px;top:89.00px">€50.00/€100.00 PL Omaha</div>
<div class="t " style="left:73.00px;top:89.00px;width:300px;text-align:right">3,797</div>
<div class="t g" style="left:188.00px;top:89.00px;width:300px;text-align:right">$171,039.85</div>
<div class="t g" style="left:299.40px;top:89.00px;width:300px;text-align:right">$79,316.03</div>
<div class="t g" style="left:407.60px;top:89.00px;width:300px;text-align:right">37.21</div>
<div class="t " style="left:516.60px;top:89.00px;width:300px;text-align:right">17.25</div>
<div class="t " style="left:625.40px;top:89.00px;width:300px;text-align:right">73.7</div>
<div class="t " style="left:734.70px;top:89.00px;width:300px;text-align:right">45.5</div>
<div class="t " style="left:843.00px;top:89.00px;width:300px;text-align:right">12.9</div>
<div class="t " style="left:27.70px;top:116.70px">£50.00/£100.00 PL Omaha</div>
<div class="t " style="left:73.00px;top:116.70px;width:300px;text-align:right">31</div>
<div class="t r" style="left:188.00px;top:116.70px;width:300px;text-align:right">-$7,418.10</div>
<div class="t r" style="left:299.40px;top:116.70px;width:300px;text-align:right">-$5,105.79</div>
<div class="t r" style="left:407.60px;top:116.70px;width:300px;text-align:right">-153.39</div>
<div class="t " style="left:516.60px;top:116.70px;width:300px;text-align:right">-105.57</div>
<div class="t " style="left:625.40px;top:116.70px;width:300px;text-align:right">16.1</div>
<div class="t " style="left:734.70px;top:116.70px;width:300px;text-align:right">16.1</div>
<div class="t " style="left:843.00px;top:116.70px;width:300px;text-align:right">17.6</div>
<div class="t " style="left:27.70px;top:144.40px">$50.00/$100.00 PL Omaha</div>
<div class="t " style="left:73.00px;top:144.40px;width:300px;text-align:right">8,368</div>
<div class="t g" style="left:188.00px;top:144.40px;width:300px;text-align:right">$352,206.91</div>
<div class="t g" style="left:299.40px;top:144.40px;width:300px;text-align:right">$330,676.63</div>
<div class="t g" style="left:407.60px;top:144.40px;width:300px;text-align:right">42.09</div>
<div class="t " style="left:516.60px;top:144.40px;width:300px;text-align:right">39.52</div>
<div class="t " style="left:625.40px;top:144.40px;width:300px;text-align:right">93.6</div>
<div class="t " style="left:734.70px;top:144.40px;width:300px;text-align:right">45.5</div>
<div class="t " style="left:843.00px;top:144.40px;width:300px;text-align:right">15.2</div>
<div class="t" style="left:27.70px;top:172.10px;transform-origin:0 0;transform:scaleX(0.99)">$25.00/$50.00 PL Fast Omaha</div>
<div class="t " style="left:73.00px;top:172.10px;width:300px;text-align:right">35,982</div>
<div class="t g" style="left:188.00px;top:172.10px;width:300px;text-align:right">$437,390.24</div>
<div class="t g" style="left:299.40px;top:172.10px;width:300px;text-align:right">$433,170.55</div>
<div class="t g" style="left:407.60px;top:172.10px;width:300px;text-align:right">24.31</div>
<div class="t " style="left:516.60px;top:172.10px;width:300px;text-align:right">24.08</div>
<div class="t " style="left:625.40px;top:172.10px;width:300px;text-align:right">90.8</div>
<div class="t " style="left:734.70px;top:172.10px;width:300px;text-align:right">46.3</div>
<div class="t " style="left:843.00px;top:172.10px;width:300px;text-align:right">15.4</div>
<div class="t " style="left:27.70px;top:199.80px">€25.00/€50.00 PL Omaha</div>
<div class="t " style="left:73.00px;top:199.80px;width:300px;text-align:right">63,677</div>
<div class="t g" style="left:188.00px;top:199.80px;width:300px;text-align:right">$1,582,292.72</div>
<div class="t g" style="left:299.40px;top:199.80px;width:300px;text-align:right">$1,258,813.83</div>
<div class="t g" style="left:407.60px;top:199.80px;width:300px;text-align:right">41.05</div>
<div class="t " style="left:516.60px;top:199.80px;width:300px;text-align:right">32.66</div>
<div class="t " style="left:625.40px;top:199.80px;width:300px;text-align:right">90.2</div>
<div class="t " style="left:734.70px;top:199.80px;width:300px;text-align:right">48.4</div>
<div class="t " style="left:843.00px;top:199.80px;width:300px;text-align:right">14.3</div>
<div class="t " style="left:27.70px;top:227.50px">$25.00/$50.00 PL Omaha</div>
<div class="t " style="left:73.00px;top:227.50px;width:300px;text-align:right">123,068</div>
<div class="t g" style="left:188.00px;top:227.50px;width:300px;text-align:right">$1,077,659.07</div>
<div class="t g" style="left:299.40px;top:227.50px;width:300px;text-align:right">$1,044,552.99</div>
<div class="t g" style="left:407.60px;top:227.50px;width:300px;text-align:right">17.51</div>
<div class="t " style="left:516.60px;top:227.50px;width:300px;text-align:right">16.98</div>
<div class="t " style="left:625.40px;top:227.50px;width:300px;text-align:right">92.8</div>
<div class="t " style="left:734.70px;top:227.50px;width:300px;text-align:right">50.3</div>
<div class="t " style="left:843.00px;top:227.50px;width:300px;text-align:right">16.2</div>
<div class="t " style="left:27.70px;top:255.20px">$15.00/$30.00 PL Omaha</div>
<div class="t " style="left:73.00px;top:255.20px;width:300px;text-align:right">13,381</div>
<div class="t g" style="left:188.00px;top:255.20px;width:300px;text-align:right">$94,344.52</div>
<div class="t g" style="left:299.40px;top:255.20px;width:300px;text-align:right">$83,539.01</div>
<div class="t g" style="left:407.60px;top:255.20px;width:300px;text-align:right">23.50</div>
<div class="t " style="left:516.60px;top:255.20px;width:300px;text-align:right">20.81</div>
<div class="t " style="left:625.40px;top:255.20px;width:300px;text-align:right">91.4</div>
<div class="t " style="left:734.70px;top:255.20px;width:300px;text-align:right">50.3</div>
<div class="t " style="left:843.00px;top:255.20px;width:300px;text-align:right">17.1</div>
<div class="t" style="left:27.70px;top:282.90px;transform-origin:0 0;transform:scaleX(0.99)">$10.00/$20.00 PL Fast Omaha</div>
<div class="t " style="left:73.00px;top:282.90px;width:300px;text-align:right">83,838</div>
<div class="t g" style="left:188.00px;top:282.90px;width:300px;text-align:right">$352,084.98</div>
<div class="t g" style="left:299.40px;top:282.90px;width:300px;text-align:right">$329,660.20</div>
<div class="t g" style="left:407.60px;top:282.90px;width:300px;text-align:right">21.00</div>
<div class="t " style="left:516.60px;top:282.90px;width:300px;text-align:right">19.66</div>
<div class="t " style="left:625.40px;top:282.90px;width:300px;text-align:right">91.6</div>
<div class="t " style="left:734.70px;top:282.90px;width:300px;text-align:right">49.5</div>
<div class="t " style="left:843.00px;top:282.90px;width:300px;text-align:right">15.5</div>
<div class="t " style="left:27.70px;top:310.60px">€10.00/€20.00 PL Omaha</div>
<div class="t " style="left:73.00px;top:310.60px;width:300px;text-align:right">57,908</div>
<div class="t g" style="left:188.00px;top:310.60px;width:300px;text-align:right">$351,948.98</div>
<div class="t g" style="left:299.40px;top:310.60px;width:300px;text-align:right">$307,817.22</div>
<div class="t g" style="left:407.60px;top:310.60px;width:300px;text-align:right">25.10</div>
<div class="t " style="left:516.60px;top:310.60px;width:300px;text-align:right">21.95</div>
<div class="t " style="left:625.40px;top:310.60px;width:300px;text-align:right">89.1</div>
<div class="t " style="left:734.70px;top:310.60px;width:300px;text-align:right">52.7</div>
<div class="t " style="left:843.00px;top:310.60px;width:300px;text-align:right">15.9</div>
<div class="t " style="left:27.70px;top:338.30px">£10.00/£20.00 PL Omaha</div>
<div class="t " style="left:73.00px;top:338.30px;width:300px;text-align:right">4,721</div>
<div class="t g" style="left:188.00px;top:338.30px;width:300px;text-align:right">$92,658.27</div>
<div class="t g" style="left:299.40px;top:338.30px;width:300px;text-align:right">$73,877.32</div>
<div class="t g" style="left:407.60px;top:338.30px;width:300px;text-align:right">62.90</div>
<div class="t " style="left:516.60px;top:338.30px;width:300px;text-align:right">50.15</div>
<div class="t " style="left:625.40px;top:338.30px;width:300px;text-align:right">91.0</div>
<div class="t " style="left:734.70px;top:338.30px;width:300px;text-align:right">61.0</div>
<div class="t " style="left:843.00px;top:338.30px;width:300px;text-align:right">16.1</div>
<div class="t " style="left:27.70px;top:366.00px">$10.00/$20.00 PL Omaha</div>
<div class="t " style="left:73.00px;top:366.00px;width:300px;text-align:right">180,327</div>
<div class="t g" style="left:188.00px;top:366.00px;width:300px;text-align:right">$659,625.82</div>
<div class="t g" style="left:299.40px;top:366.00px;width:300px;text-align:right">$707,048.45</div>
<div class="t g" style="left:407.60px;top:366.00px;width:300px;text-align:right">18.29</div>
<div class="t " style="left:516.60px;top:366.00px;width:300px;text-align:right">19.60</div>
<div class="t " style="left:625.40px;top:366.00px;width:300px;text-align:right">90.0</div>
<div class="t " style="left:734.70px;top:366.00px;width:300px;text-align:right">52.1</div>
<div class="t " style="left:843.00px;top:366.00px;width:300px;text-align:right">16.4</div>
<div class="t" style="left:27.70px;top:393.70px;transform-origin:0 0;transform:scaleX(0.99)">$5.00/$10.00 PL Fast Omaha</div>
<div class="t " style="left:73.00px;top:393.70px;width:300px;text-align:right">178,285</div>
<div class="t g" style="left:188.00px;top:393.70px;width:300px;text-align:right">$409,989.12</div>
<div class="t g" style="left:299.40px;top:393.70px;width:300px;text-align:right">$393,693.09</div>
<div class="t g" style="left:407.60px;top:393.70px;width:300px;text-align:right">23.00</div>
<div class="t " style="left:516.60px;top:393.70px;width:300px;text-align:right">22.08</div>
<div class="t " style="left:625.40px;top:393.70px;width:300px;text-align:right">93.2</div>
<div class="t " style="left:734.70px;top:393.70px;width:300px;text-align:right">52.4</div>
<div class="t " style="left:843.00px;top:393.70px;width:300px;text-align:right">15.3</div>
<div class="t " style="left:27.70px;top:421.40px">€5.00/€10.00 PL Omaha</div>
<div class="t " style="left:73.00px;top:421.40px;width:300px;text-align:right">152,247</div>
<div class="t g" style="left:188.00px;top:421.40px;width:300px;text-align:right">$629,002.09</div>
<div class="t g" style="left:299.40px;top:421.40px;width:300px;text-align:right">$535,630.80</div>
<div class="t g" style="left:407.60px;top:421.40px;width:300px;text-align:right">34.13</div>
<div class="t " style="left:516.60px;top:421.40px;width:300px;text-align:right">29.06</div>
<div class="t " style="left:625.40px;top:421.40px;width:300px;text-align:right">90.9</div>
<div class="t " style="left:734.70px;top:421.40px;width:300px;text-align:right">54.5</div>
<div class="t " style="left:843.00px;top:421.40px;width:300px;text-align:right">15.8</div>
<div class="t " style="left:27.70px;top:449.10px">£5.00/£10.00 PL Omaha</div>
<div class="t " style="left:73.00px;top:449.10px;width:300px;text-align:right">7,141</div>
<div class="t g" style="left:188.00px;top:449.10px;width:300px;text-align:right">$59,872.11</div>
<div class="t g" style="left:299.40px;top:449.10px;width:300px;text-align:right">$43,864.93</div>
<div class="t g" style="left:407.60px;top:449.10px;width:300px;text-align:right">53.74</div>
<div class="t " style="left:516.60px;top:449.10px;width:300px;text-align:right">39.37</div>
<div class="t " style="left:625.40px;top:449.10px;width:300px;text-align:right">84.2</div>
<div class="t " style="left:734.70px;top:449.10px;width:300px;text-align:right">56.4</div>
<div class="t " style="left:843.00px;top:449.10px;width:300px;text-align:right">15.1</div>
</div>
<div class="a" style="left:18.00px;top:542.00px;width:1106.60px;height:25.00px;background:#212528;"></div>
<div class="a" style="left:0;top:542px;width:1124.60px;height:25px;overflow:hidden">
<div class="t f" style="left:70.80px;top:4.00px;width:300px;text-align:right">1,300,794</div>
<div class="t f" style="left:185.80px;top:4.00px;width:300px;text-align:right">$7,423,253.62</div>
<div class="t f" style="left:297.20px;top:4.00px;width:300px;text-align:right">$8,416,821.81</div>
<div class="t f" style="left:405.40px;top:4.00px;width:300px;text-align:right">25.3</div>
<div class="t f" style="left:514.40px;top:4.00px;width:300px;text-align:right">24.3</div>
<div class="t f" style="left:623.20px;top:4.00px;width:300px;text-align:right">89.7</div>
<div class="t f" style="left:732.50px;top:4.00px;width:300px;text-align:right">52.7</div>
<div class="t f" style="left:840.80px;top:4.00px;width:300px;text-align:right">15.6</div>
</div>
<div class="a" style="left:1124.60px;top:37.00px;width:21.40px;height:289.00px;background:#5a5e62;"></div>
<div class="a" style="left:18.00px;top:567.00px;width:1106.60px;height:21.00px;background:#454a4d;"></div>
<div class="a" style="left:18.00px;top:567.00px;width:522.00px;height:21.00px;background:#55595d;"></div>
<div class="a" style="left:37.50px;top:567.00px;width:2.00px;height:21.00px;background:#47494c;"></div>
<div class="a" style="left:1104.00px;top:567.00px;width:18.30px;height:21.00px;background:#55595d;"></div>
<div class="a" style="left:0.00px;top:626.00px;width:1145.00px;height:386.00px;background:#454a4d;"></div>
<div class="a" style="left:0.00px;top:626.00px;width:22.00px;height:386.00px;background:#575b5f;"></div>
<div class="a" style="left:22.00px;top:626.00px;width:1102.62px;height:347.00px;background:#454a4d;"></div>
<div class="a" style="left:0;top:626px;width:1124.62px;height:347px;overflow:hidden">
<div class="t " style="left:31.67px;top:7.60px">£5.00/£10.00 PL Omaha</div>
<div class="t " style="left:75.72px;top:7.60px;width:300px;text-align:right">7,141</div>
<div class="t g" style="left:190.31px;top:7.60px;width:300px;text-align:right">$59,872.11</div>
<div class="t g" style="left:301.31px;top:7.60px;width:300px;text-align:right">$43,864.93</div>
<div class="t g" style="left:409.12px;top:7.60px;width:300px;text-align:right">53.74</div>
<div class="t " style="left:517.73px;top:7.60px;width:300px;text-align:right">39.37</div>
<div class="t " style="left:626.13px;top:7.60px;width:300px;text-align:right">84.2</div>
<div class="t " style="left:735.04px;top:7.60px;width:300px;text-align:right">56.4</div>
<div class="t " style="left:842.95px;top:7.60px;width:300px;text-align:right">15.1</div>
<div class="t " style="left:31.67px;top:35.20px">$5.00/$10.00 PL Omaha</div>
<div class="t " style="left:75.72px;top:35.20px;width:300px;text-align:right">158,938</div>
<div class="t g" style="left:190.31px;top:35.20px;width:300px;text-align:right">$351,877.23</div>
<div class="t g" style="left:301.31px;top:35.20px;width:300px;text-align:right">$392,340.63</div>
<div class="t g" style="left:409.12px;top:35.20px;width:300px;text-align:right">22.14</div>
<div class="t " style="left:517.73px;top:35.20px;width:300px;text-align:right">24.69</div>
<div class="t " style="left:626.13px;top:35.20px;width:300px;text-align:right">84.2</div>
<div class="t " style="left:735.04px;top:35.20px;width:300px;text-align:right">57.0</div>
<div class="t " style="left:842.95px;top:35.20px;width:300px;text-align:right">14.6</div>
<div class="t " style="left:31.67px;top:62.80px">$5.00/$5.00 PL Omaha</div>
<div class="t " style="left:75.72px;top:62.80px;width:300px;text-align:right">4</div>
<div class="t r" style="left:190.31px;top:62.80px;width:300px;text-align:right">-$225.50</div>
<div class="t r" style="left:301.31px;top:62.80px;width:300px;text-align:right">-$225.50</div>
<div class="t r" style="left:409.12px;top:62.80px;width:300px;text-align:right">-1,127.50</div>
<div class="t " style="left:517.73px;top:62.80px;width:300px;text-align:right">-1,127.50</div>
<div class="t " style="left:626.13px;top:62.80px;width:300px;text-align:right">75.0</div>
<div class="t " style="left:735.04px;top:62.80px;width:300px;text-align:right">50.0</div>
<div class="t " style="left:842.95px;top:62.80px;width:300px;text-align:right">0.00</div>
<div class="t " style="left:31.67px;top:90.40px">€3.00/€6.00 PL Omaha</div>
<div class="t " style="left:75.72px;top:90.40px;width:300px;text-align:right">60,089</div>
<div class="t g" style="left:190.31px;top:90.40px;width:300px;text-align:right">$159,562.82</div>
<div class="t g" style="left:301.31px;top:90.40px;width:300px;text-align:right">$151,020.82</div>
<div class="t g" style="left:409.12px;top:90.40px;width:300px;text-align:right">36.56</div>
<div class="t " style="left:517.73px;top:90.40px;width:300px;text-align:right">34.60</div>
<div class="t " style="left:626.13px;top:90.40px;width:300px;text-align:right">89.6</div>
<div class="t " style="left:735.04px;top:90.40px;width:300px;text-align:right">56.5</div>
<div class="t " style="left:842.95px;top:90.40px;width:300px;text-align:right">15.1</div>
<div class="t " style="left:31.67px;top:118.00px">£3.00/£6.00 PL Omaha</div>
<div class="t " style="left:75.72px;top:118.00px;width:300px;text-align:right">2,485</div>
<div class="t r" style="left:190.31px;top:118.00px;width:300px;text-align:right">-$6,967.96</div>
<div class="t r" style="left:301.31px;top:118.00px;width:300px;text-align:right">-$1,942.50</div>
<div class="t r" style="left:409.12px;top:118.00px;width:300px;text-align:right">-29.96</div>
<div class="t " style="left:517.73px;top:118.00px;width:300px;text-align:right">-8.35</div>
<div class="t " style="left:626.13px;top:118.00px;width:300px;text-align:right">79.4</div>
<div class="t " style="left:735.04px;top:118.00px;width:300px;text-align:right">56.9</div>
<div class="t " style="left:842.95px;top:118.00px;width:300px;text-align:right">12.5</div>
<div class="t " style="left:31.67px;top:145.60px">$3.00/$6.00 PL Omaha</div>
<div class="t " style="left:75.72px;top:145.60px;width:300px;text-align:right">76,258</div>
<div class="t g" style="left:190.31px;top:145.60px;width:300px;text-align:right">$115,081.97</div>
<div class="t g" style="left:301.31px;top:145.60px;width:300px;text-align:right">$130,018.75</div>
<div class="t g" style="left:409.12px;top:145.60px;width:300px;text-align:right">25.15</div>
<div class="t " style="left:517.73px;top:145.60px;width:300px;text-align:right">28.42</div>
<div class="t " style="left:626.13px;top:145.60px;width:300px;text-align:right">80.3</div>
<div class="t " style="left:735.04px;top:145.60px;width:300px;text-align:right">56.3</div>
<div class="t " style="left:842.95px;top:145.60px;width:300px;text-align:right">13.6</div>
<div class="t" style="left:31.67px;top:173.20px;transform-origin:0 0;transform:scaleX(0.99)">$2.50/$5.00 PL Fast Omaha</div>
<div class="t " style="left:75.72px;top:173.20px;width:300px;text-align:right">11,358</div>
<div class="t g" style="left:190.31px;top:173.20px;width:300px;text-align:right">$22,157.66</div>
<div class="t g" style="left:301.31px;top:173.20px;width:300px;text-align:right">$12,068.37</div>
<div class="t g" style="left:409.12px;top:173.20px;width:300px;text-align:right">39.02</div>
<div class="t " style="left:517.73px;top:173.20px;width:300px;text-align:right">21.25</div>
<div class="t " style="left:626.13px;top:173.20px;width:300px;text-align:right">95.2</div>
<div class="t " style="left:735.04px;top:173.20px;width:300px;text-align:right">53.0</div>
<div class="t " style="left:842.95px;top:173.20px;width:300px;text-align:right">15.3</div>
<div class="t " style="left:31.67px;top:200.80px">$2.50/$5.00 PL Omaha</div>
<div class="t " style="left:75.72px;top:200.80px;width:300px;text-align:right">956</div>
<div class="t g" style="left:190.31px;top:200.80px;width:300px;text-align:right">$6,471.25</div>
<div class="t g" style="left:301.31px;top:200.80px;width:300px;text-align:right">$5,083.90</div>
<div class="t g" style="left:409.12px;top:200.80px;width:300px;text-align:right">135.38</div>
<div class="t " style="left:517.73px;top:200.80px;width:300px;text-align:right">106.36</div>
<div class="t " style="left:626.13px;top:200.80px;width:300px;text-align:right">98.7</div>
<div class="t " style="left:735.04px;top:200.80px;width:300px;text-align:right">59.6</div>
<div class="t " style="left:842.95px;top:200.80px;width:300px;text-align:right">18.2</div>
<div class="t " style="left:31.67px;top:228.40px">£2.00/£5.00 PL Omaha</div>
<div class="t " style="left:75.72px;top:228.40px;width:300px;text-align:right">4,411</div>
<div class="t g" style="left:190.31px;top:228.40px;width:300px;text-align:right">$9,494.27</div>
<div class="t g" style="left:301.31px;top:228.40px;width:300px;text-align:right">$11,968.13</div>
<div class="t g" style="left:409.12px;top:228.40px;width:300px;text-align:right">27.59</div>
<div class="t " style="left:517.73px;top:228.40px;width:300px;text-align:right">34.78</div>
<div class="t " style="left:626.13px;top:228.40px;width:300px;text-align:right">75.1</div>
<div class="t " style="left:735.04px;top:228.40px;width:300px;text-align:right">55.4</div>
<div class="t " style="left:842.95px;top:228.40px;width:300px;text-align:right">18.3</div>
<div class="t " style="left:31.67px;top:256.00px">€2.00/€4.00 PL Omaha</div>
<div class="t " style="left:75.72px;top:256.00px;width:300px;text-align:right">19,906</div>
<div class="t g" style="left:190.31px;top:256.00px;width:300px;text-align:right">$21,324.89</div>
<div class="t g" style="left:301.31px;top:256.00px;width:300px;text-align:right">$20,727.55</div>
<div class="t g" style="left:409.12px;top:256.00px;width:300px;text-align:right">22.12</div>
<div class="t " style="left:517.73px;top:256.00px;width:300px;text-align:right">21.50</div>
<div class="t " style="left:626.13px;top:256.00px;width:300px;text-align:right">96.4</div>
<div class="t " style="left:735.04px;top:256.00px;width:300px;text-align:right">56.6</div>
<div class="t " style="left:842.95px;top:256.00px;width:300px;text-align:right">17.1</div>
<div class="t " style="left:31.67px;top:283.60px">£2.00/£4.00 PL Omaha</div>
<div class="t " style="left:75.72px;top:283.60px;width:300px;text-align:right">63</div>
<div class="t g" style="left:190.31px;top:283.60px;width:300px;text-align:right">$300.00</div>
<div class="t g" style="left:301.31px;top:283.60px;width:300px;text-align:right">$300.00</div>
<div class="t g" style="left:409.12px;top:283.60px;width:300px;text-align:right">76.31</div>
<div class="t " style="left:517.73px;top:283.60px;width:300px;text-align:right">76.31</div>
<div class="t " style="left:626.13px;top:283.60px;width:300px;text-align:right">74.2</div>
<div class="t " style="left:735.04px;top:283.60px;width:300px;text-align:right">54.8</div>
<div class="t " style="left:842.95px;top:283.60px;width:300px;text-align:right">16.7</div>
<div class="t " style="left:31.67px;top:311.20px">$2.00/$4.00 PL Omaha</div>
<div class="t " style="left:75.72px;top:311.20px;width:300px;text-align:right">21,859</div>
<div class="t g" style="left:190.31px;top:311.20px;width:300px;text-align:right">$44,110.90</div>
<div class="t g" style="left:301.31px;top:311.20px;width:300px;text-align:right">$36,552.53</div>
<div class="t g" style="left:409.12px;top:311.20px;width:300px;text-align:right">50.45</div>
<div class="t " style="left:517.73px;top:311.20px;width:300px;text-align:right">41.80</div>
<div class="t " style="left:626.13px;top:311.20px;width:300px;text-align:right">87.8</div>
<div class="t " style="left:735.04px;top:311.20px;width:300px;text-align:right">57.1</div>
<div class="t " style="left:842.95px;top:311.20px;width:300px;text-align:right">14.9</div>
</div>
<div class="a" style="left:22.00px;top:973.00px;width:1102.62px;height:24.00px;background:#212528;"></div>
<div class="a" style="left:0;top:973px;width:1124.62px;height:24px;overflow:hidden">
<div class="t f" style="left:73.52px;top:3.50px;width:300px;text-align:right">1,300,794</div>
<div class="t f" style="left:188.11px;top:3.50px;width:300px;text-align:right">$7,423,253.62</div>
<div class="t f" style="left:299.11px;top:3.50px;width:300px;text-align:right">$8,416,821.81</div>
<div class="t f" style="left:406.92px;top:3.50px;width:300px;text-align:right">25.3</div>
<div class="t f" style="left:515.53px;top:3.50px;width:300px;text-align:right">24.3</div>
<div class="t f" style="left:623.93px;top:3.50px;width:300px;text-align:right">89.7</div>
<div class="t f" style="left:732.84px;top:3.50px;width:300px;text-align:right">52.7</div>
<div class="t f" style="left:840.75px;top:3.50px;width:300px;text-align:right">15.6</div>
</div>
<div class="a" style="left:1124.62px;top:690.00px;width:20.38px;height:287.00px;background:#5a5e62;"></div>
<div class="a" style="left:22.00px;top:997.00px;width:1102.62px;height:15.00px;background:#454a4d;"></div>
<div class="a" style="left:22.00px;top:997.00px;width:520.12px;height:15.00px;background:#55595d;"></div>
<div class="a" style="left:41.50px;top:997.00px;width:2.00px;height:15.00px;background:#47494c;"></div>
<div class="a" style="left:1104.09px;top:997.00px;width:18.23px;height:15.00px;background:#55595d;"></div>
<div class="a" style="left:0;top:16px;width:1124.6px;height:68px;overflow:hidden">
<div class="hd" style="left:97.70px;top:26.30px;text-align:left;transform-origin:0 0;transform:scaleX(1.012)">Game Type</div>
<div class="hd" style="left:300.40px;top:15.30px;text-align:left;transform-origin:0 0;transform:scaleX(1.067)">Total</div>
<div class="hd" style="left:295.00px;top:35.70px;text-align:left;transform-origin:0 0;transform:scaleX(1.006)">Hands</div>
<div class="hd" style="left:397.20px;top:15.30px;text-align:left;transform-origin:0 0;transform:scaleX(1.064)">Net Won</div>
<div class="hd" style="left:413.90px;top:35.70px;text-align:left;transform-origin:0 0;transform:scaleX(0.928)">USD</div>
<div class="hd" style="left:507.40px;top:15.30px;text-align:left;transform-origin:0 0;transform:scaleX(0.935)">$ USD (EV</div>
<div class="hd" style="left:509.00px;top:35.70px;text-align:left;transform-origin:0 0;transform:scaleX(1.052)">adjusted)</div>
<div class="hd" style="left:626.40px;top:25.50px;text-align:left;transform-origin:0 0;transform:scaleX(1.094)">bb/100</div>
<div class="hd" style="left:751.30px;top:15.30px;text-align:left;transform-origin:0 0;transform:scaleX(0.939)">EV</div>
<div class="hd" style="left:735.30px;top:35.70px;text-align:left;transform-origin:0 0;transform:scaleX(1.096)">bb/100</div>
<div class="hd" style="left:852.40px;top:25.50px;text-align:left;transform-origin:0 0;transform:scaleX(0.948)">VPIP</div>
<div class="hd" style="left:964.80px;top:25.50px;text-align:left;transform-origin:0 0;transform:scaleX(0.883)">PFR</div>
<div class="hd" style="left:1070.10px;top:25.50px;text-align:left;transform-origin:0 0;transform:scaleX(1.053)">3Bet</div>
</div>
<div class="a" style="left:253.8px;top:47.8px;width:0;height:0;border-left:5.2px solid transparent;border-right:5.2px solid transparent;border-top:5.5px solid #d3d4d5"></div>
<div class="a" style="left:0;top:18.3px;width:15.5px;height:38px;background:#1b1c1d;border-radius:0 3px 3px 0"></div>
<div class="a" style="left:-14px;top:31px;width:40px;height:14px;transform:rotate(-90deg);font-size:12px;line-height:14px;font-weight:bold;color:#bdbdbd;text-align:center">Stats</div>
<div class="a" style="left:1124.60px;top:16.00px;width:21.40px;height:21.00px;background:#585c60;"></div>
<div class="a" style="left:1125.00px;top:36.50px;width:18.00px;height:1.50px;background:#454a4d;"></div>
<div class="a" style="left:1123.20px;top:16.00px;width:1.60px;height:68.00px;background:#4d5054;"></div>
<div class="a" style="left:1143.00px;top:37.00px;width:3.00px;height:510.00px;background:#4c4f53;"></div>
<div class="a" style="left:1128px;top:24.5px;width:0;height:0;border-left:6px solid transparent;border-right:6px solid transparent;border-bottom:6px solid #d9dadb"></div>
<div class="a" style="left:1125.60px;top:548.00px;width:16.00px;height:18.00px;background:#55595d;"></div>
<div class="a" style="left:1128.5px;top:553.6px;width:0;height:0;border-left:6px solid transparent;border-right:6px solid transparent;border-top:6px solid #d9dadb"></div>
<div class="a" style="left:24.3px;top:571.8px;width:0;height:0;border-top:5.5px solid transparent;border-bottom:5.5px solid transparent;border-right:7px solid #c9cacb"></div>
<div class="a" style="left:1109.8px;top:571.8px;width:0;height:0;border-top:5.5px solid transparent;border-bottom:5.5px solid transparent;border-left:7px solid #c9cacb"></div>
<div class="a" style="left:0.00px;top:588.00px;width:1146.00px;height:2.00px;background:#36393c;"></div>
<div class="a" style="left:1125.00px;top:977.20px;width:18.00px;height:19.50px;background:#55595d;"></div>
<div class="a" style="left:1128px;top:984px;width:0;height:0;border-left:6px solid transparent;border-right:6px solid transparent;border-top:6px solid #d9dadb"></div>
<div class="a" style="left:1143.00px;top:690.00px;width:2.00px;height:287.00px;background:#4c4f53;"></div>
<div class="a" style="left:29.1px;top:1002.0px;width:0;height:0;border-top:5.5px solid transparent;border-bottom:5.5px solid transparent;border-right:7px solid #c9cacb"></div>
<div class="a" style="left:1109.5px;top:1002.5px;width:0;height:0;border-top:5.5px solid transparent;border-bottom:5.5px solid transparent;border-left:7px solid #c9cacb"></div></div></body></html>
